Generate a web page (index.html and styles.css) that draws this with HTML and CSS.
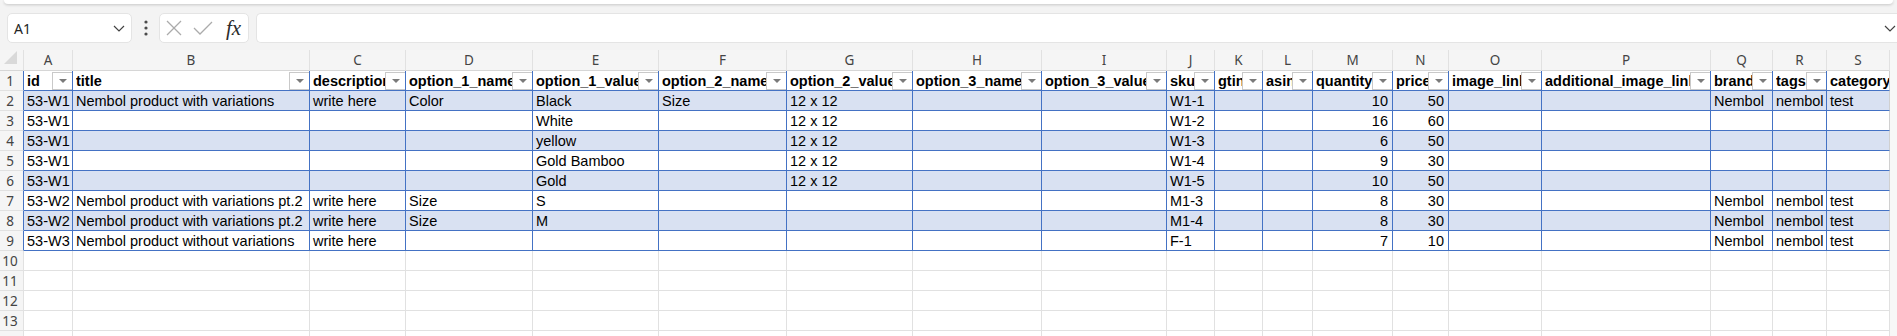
FILE: index.html
```html
<!DOCTYPE html>
<html lang="en">
<head>
    <meta charset="UTF-8">
    <title>Nembol import sheet</title>
    <link rel="stylesheet" href="styles.css">
</head>
<body>
    <div class="ribbon-edge"></div>

    <div class="formula-bar">
        <div class="name-box">
            <span>A1</span>
            <svg class="chev" width="12" height="7" viewBox="0 0 12 7"><polyline points="1,1 6,6 11,1" /></svg>
        </div>
        <div class="more">
            <svg width="4" height="16" viewBox="0 0 4 16"><circle cx="2" cy="2" r="1.6" /><circle cx="2" cy="8" r="1.6" /><circle cx="2" cy="14" r="1.6" /></svg>
        </div>
        <div class="fx-buttons">
            <svg class="btn-x" width="16" height="16" viewBox="0 0 16 16"><line x1="1" y1="1" x2="15" y2="15" /><line x1="15" y1="1" x2="1" y2="15" /></svg>
            <svg class="btn-ok" width="20" height="14" viewBox="0 0 20 14"><polyline points="1,7 7,13 19,1" /></svg>
            <span class="fx">fx</span>
        </div>
        <div class="formula-input">
            <svg class="chev" width="12" height="7" viewBox="0 0 12 7"><polyline points="1,1 6,6 11,1" /></svg>
        </div>
    </div>

    <table class="sheet">
        <colgroup>
            <col class="c-rh"><col class="c-a"><col class="c-b"><col class="c-c"><col class="c-d"><col class="c-e"><col class="c-f"><col class="c-g"><col class="c-h"><col class="c-i"><col class="c-j"><col class="c-k"><col class="c-l"><col class="c-m"><col class="c-n"><col class="c-o"><col class="c-p"><col class="c-q"><col class="c-r"><col class="c-s"><col class="c-edge">
        </colgroup>
        <thead>
            <tr class="letters">
                <th class="corner"><span class="corner-tri"></span></th>
                <th>A</th><th>B</th><th>C</th><th>D</th><th>E</th><th>F</th><th>G</th><th>H</th><th>I</th><th>J</th><th>K</th><th>L</th><th>M</th><th>N</th><th>O</th><th>P</th><th>Q</th><th>R</th><th>S</th>
                <th class="edge"></th>
            </tr>
        </thead>
        <tbody>
            <tr class="in hdr">
                <td class="rh">1</td>
                <td><div class="hd"><span class="hd-txt">id</span><span class="flt"></span></div></td>
                <td><div class="hd"><span class="hd-txt">title</span><span class="flt"></span></div></td>
                <td><div class="hd"><span class="hd-txt">description</span><span class="flt"></span></div></td>
                <td><div class="hd"><span class="hd-txt">option_1_name</span><span class="flt"></span></div></td>
                <td><div class="hd"><span class="hd-txt">option_1_value</span><span class="flt"></span></div></td>
                <td><div class="hd"><span class="hd-txt">option_2_name</span><span class="flt"></span></div></td>
                <td><div class="hd"><span class="hd-txt">option_2_value</span><span class="flt"></span></div></td>
                <td><div class="hd"><span class="hd-txt">option_3_name</span><span class="flt"></span></div></td>
                <td><div class="hd"><span class="hd-txt">option_3_value</span><span class="flt"></span></div></td>
                <td><div class="hd"><span class="hd-txt">sku</span><span class="flt"></span></div></td>
                <td><div class="hd"><span class="hd-txt">gtin</span><span class="flt"></span></div></td>
                <td><div class="hd"><span class="hd-txt">asin</span><span class="flt"></span></div></td>
                <td><div class="hd"><span class="hd-txt">quantity</span><span class="flt"></span></div></td>
                <td><div class="hd"><span class="hd-txt">price</span><span class="flt"></span></div></td>
                <td><div class="hd"><span class="hd-txt">image_link</span><span class="flt"></span></div></td>
                <td><div class="hd"><span class="hd-txt">additional_image_link</span><span class="flt"></span></div></td>
                <td><div class="hd"><span class="hd-txt">brand</span><span class="flt"></span></div></td>
                <td><div class="hd"><span class="hd-txt">tags</span><span class="flt"></span></div></td>
                <td>category</td>
                <td class="edge"></td>
            </tr>
            <tr class="in band">
                <td class="rh">2</td>
                <td>53-W1</td><td>Nembol product with variations</td><td>write here</td><td>Color</td><td>Black</td><td>Size</td><td>12 x 12</td><td></td><td></td>
                <td>W1-1</td><td></td><td></td><td class="num">10</td><td class="num">50</td><td></td><td></td><td>Nembol</td><td>nembol</td><td>test</td>
                <td class="edge"></td>
            </tr>
            <tr class="in">
                <td class="rh">3</td>
                <td>53-W1</td><td></td><td></td><td></td><td>White</td><td></td><td>12 x 12</td><td></td><td></td>
                <td>W1-2</td><td></td><td></td><td class="num">16</td><td class="num">60</td><td></td><td></td><td></td><td></td><td></td>
                <td class="edge"></td>
            </tr>
            <tr class="in band">
                <td class="rh">4</td>
                <td>53-W1</td><td></td><td></td><td></td><td>yellow</td><td></td><td>12 x 12</td><td></td><td></td>
                <td>W1-3</td><td></td><td></td><td class="num">6</td><td class="num">50</td><td></td><td></td><td></td><td></td><td></td>
                <td class="edge"></td>
            </tr>
            <tr class="in">
                <td class="rh">5</td>
                <td>53-W1</td><td></td><td></td><td></td><td>Gold Bamboo</td><td></td><td>12 x 12</td><td></td><td></td>
                <td>W1-4</td><td></td><td></td><td class="num">9</td><td class="num">30</td><td></td><td></td><td></td><td></td><td></td>
                <td class="edge"></td>
            </tr>
            <tr class="in band">
                <td class="rh">6</td>
                <td>53-W1</td><td></td><td></td><td></td><td>Gold</td><td></td><td>12 x 12</td><td></td><td></td>
                <td>W1-5</td><td></td><td></td><td class="num">10</td><td class="num">50</td><td></td><td></td><td></td><td></td><td></td>
                <td class="edge"></td>
            </tr>
            <tr class="in">
                <td class="rh">7</td>
                <td>53-W2</td><td>Nembol product with variations pt.2</td><td>write here</td><td>Size</td><td>S</td><td></td><td></td><td></td><td></td>
                <td>M1-3</td><td></td><td></td><td class="num">8</td><td class="num">30</td><td></td><td></td><td>Nembol</td><td>nembol</td><td>test</td>
                <td class="edge"></td>
            </tr>
            <tr class="in band">
                <td class="rh">8</td>
                <td>53-W2</td><td>Nembol product with variations pt.2</td><td>write here</td><td>Size</td><td>M</td><td></td><td></td><td></td><td></td>
                <td>M1-4</td><td></td><td></td><td class="num">8</td><td class="num">30</td><td></td><td></td><td>Nembol</td><td>nembol</td><td>test</td>
                <td class="edge"></td>
            </tr>
            <tr class="in">
                <td class="rh">9</td>
                <td>53-W3</td><td>Nembol product without variations</td><td>write here</td><td></td><td></td><td></td><td></td><td></td><td></td>
                <td>F-1</td><td></td><td></td><td class="num">7</td><td class="num">10</td><td></td><td></td><td>Nembol</td><td>nembol</td><td>test</td>
                <td class="edge"></td>
            </tr>
            <tr>
                <td class="rh">10</td>
                <td></td><td></td><td></td><td></td><td></td><td></td><td></td><td></td><td></td><td></td><td></td><td></td><td></td><td></td><td></td><td></td><td></td><td></td><td></td>
                <td class="edge"></td>
            </tr>
            <tr>
                <td class="rh">11</td>
                <td></td><td></td><td></td><td></td><td></td><td></td><td></td><td></td><td></td><td></td><td></td><td></td><td></td><td></td><td></td><td></td><td></td><td></td><td></td>
                <td class="edge"></td>
            </tr>
            <tr>
                <td class="rh">12</td>
                <td></td><td></td><td></td><td></td><td></td><td></td><td></td><td></td><td></td><td></td><td></td><td></td><td></td><td></td><td></td><td></td><td></td><td></td><td></td>
                <td class="edge"></td>
            </tr>
            <tr>
                <td class="rh">13</td>
                <td></td><td></td><td></td><td></td><td></td><td></td><td></td><td></td><td></td><td></td><td></td><td></td><td></td><td></td><td></td><td></td><td></td><td></td><td></td>
                <td class="edge"></td>
            </tr>
            <tr>
                <td class="rh">14</td>
                <td></td><td></td><td></td><td></td><td></td><td></td><td></td><td></td><td></td><td></td><td></td><td></td><td></td><td></td><td></td><td></td><td></td><td></td><td></td>
                <td class="edge"></td>
            </tr>
        </tbody>
    </table>
</body>
</html>
```

FILE: styles.css
```css
body {
    margin: 0;
    width: 1897px;
    height: 336px;
    overflow: hidden;
    background: #f3f3f3;
    font-family: 'Liberation Sans', Arial, sans-serif;
}

/* bottom of the ribbon panel */
.ribbon-edge {
    height: 4px;
    margin: 0 4px;
    background: #fff;
    border-radius: 0 0 8px 8px;
    box-shadow: 0 1px 3px rgba(0, 0, 0, 0.18);
}

.formula-bar {
    display: flex;
    align-items: center;
    height: 30px;
    margin-top: 9px;
    padding-left: 7px;
}

.chev polyline {
    fill: none;
    stroke: #424242;
    stroke-width: 1.2;
}

.name-box {
    width: 125px;
    height: 30px;
    box-sizing: border-box;
    display: flex;
    align-items: center;
    justify-content: space-between;
    padding: 0 6px 0 6px;
    background: #fff;
    border: 1px solid #e4e4e4;
    border-radius: 5px;
    font-family: 'Noto Sans', sans-serif;
    font-size: 14px;
    color: #242424;
}

.more {
    width: 27px;
    display: flex;
    justify-content: center;
}

.more circle {
    fill: #4a4a4a;
}

.fx-buttons {
    width: 90px;
    height: 30px;
    box-sizing: border-box;
    display: flex;
    align-items: center;
    padding-left: 6px;
    background: #fff;
    border: 1px solid #e4e4e4;
    border-radius: 5px;
}

.btn-x line,
.btn-ok polyline {
    fill: none;
    stroke: #ababab;
    stroke-width: 1.3;
}

.btn-ok {
    margin-left: 11px;
}

.fx {
    margin-left: 13px;
    font-family: 'Liberation Serif', 'Times New Roman', serif;
    font-style: italic;
    font-size: 21px;
    line-height: 20px;
    color: #2b2b2b;
}

.formula-input {
    flex: 1;
    height: 30px;
    box-sizing: border-box;
    margin-left: 7px;
    display: flex;
    align-items: center;
    justify-content: flex-end;
    padding-right: 1px;
    background: #fff;
    border: 1px solid #e4e4e4;
    border-right: none;
    border-radius: 5px 0 0 5px;
}

/* grid */
.sheet {
    margin-top: 7px;
    width: 1897px;
    table-layout: fixed;
    border-spacing: 0;
}

.c-rh { width: 24px; }
.c-a { width: 49px; }
.c-b { width: 237px; }
.c-c { width: 96px; }
.c-d { width: 127px; }
.c-e { width: 126px; }
.c-f { width: 128px; }
.c-g { width: 126px; }
.c-h { width: 129px; }
.c-i { width: 125px; }
.c-j { width: 48px; }
.c-k { width: 48px; }
.c-l { width: 50px; }
.c-m { width: 80px; }
.c-n { width: 56px; }
.c-o { width: 93px; }
.c-p { width: 169px; }
.c-q { width: 62px; }
.c-r { width: 54px; }
.c-s { width: 63px; }
.c-edge { width: 7px; }

.sheet th,
.sheet td {
    box-sizing: border-box;
    padding: 0 3px;
    border-right: 1px solid #e1e1e1;
    border-bottom: 1px solid #e1e1e1;
    white-space: nowrap;
    overflow: hidden;
}

.letters th {
    height: 21px;
    padding: 0;
    background: #f5f5f5;
    border-bottom-color: #d6d6d6;
    font-family: 'Noto Sans', sans-serif;
    font-weight: normal;
    font-size: 13.5px;
    color: #444;
    text-align: center;
}

.corner {
    text-align: right;
    vertical-align: bottom;
}

.corner-tri {
    display: inline-block;
    width: 0;
    height: 0;
    margin: 0 2px 2px 0;
    border-left: 13px solid transparent;
    border-bottom: 13px solid #d9d9d9;
}

.sheet tbody tr {
    height: 20px;
}

.sheet td {
    font-size: 14.5px;
    line-height: 18px;
    color: #000;
    background: #fff;
}

.sheet td.rh {
    padding: 0 3px 0 0;
    background: #f5f5f5;
    font-family: 'Noto Sans', sans-serif;
    font-weight: normal;
    font-size: 13.5px;
    color: #444;
    text-align: center;
}

.sheet .edge {
    padding: 0;
    background: #f7f7f7;
    border-right: none;
    border-bottom: none;
}

/* excel table area */
.in td {
    border-color: #4472c4;
}

.in td.rh {
    border-right-color: #4472c4;
    border-bottom-color: #e1e1e1;
}

.in td:nth-last-child(2) {
    border-right-color: #d0d0d0;
}

.band td {
    background: #d9e1f2;
}

.band td.rh {
    background: #f5f5f5;
}

.band td.edge {
    background: #f7f7f7;
}

.hdr td {
    padding-right: 0;
    font-weight: bold;
}

.hd {
    display: flex;
    align-items: center;
    height: 19px;
}

.hd-txt {
    flex: 1;
    min-width: 0;
    overflow: hidden;
}

.flt {
    flex: none;
    width: 20px;
    height: 18px;
    box-sizing: border-box;
    display: flex;
    align-items: center;
    justify-content: center;
    background: #fff;
    border: 1px solid #c9c9c9;
    border-right: none;
}

.flt::after {
    content: "";
    width: 0;
    height: 0;
    border-left: 4px solid transparent;
    border-right: 4px solid transparent;
    border-top: 4px solid #7a7a7a;
}

.sheet td.num {
    padding-right: 4px;
    text-align: right;
}
```
